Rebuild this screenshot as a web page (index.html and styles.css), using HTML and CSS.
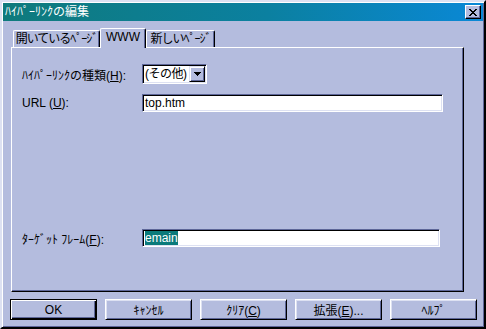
FILE: index.html
```html
<!DOCTYPE html>
<html lang="ja">
<head>
  <meta charset="UTF-8">
  <title>ﾊｲﾊﾟｰﾘﾝｸの編集</title>
  <link rel="stylesheet" href="styles.css">
</head>
<body>

<div class="dialog">
  <div class="titlebar">
    <span class="title">ﾊｲﾊﾟｰﾘﾝｸの編集</span>
    <button class="close" aria-label="閉じる">
      <svg width="8" height="7" viewBox="0 0 8 7" shape-rendering="crispEdges">
        <path d="M0 0h2v1h-2zM6 0h2v1h-2zM1 1h2v1h-2zM5 1h2v1h-2zM2 2h4v1h-4zM3 3h2v1h-2zM2 4h4v1h-4zM1 5h2v1h-2zM5 5h2v1h-2zM0 6h2v1h-2zM6 6h2v1h-2z" fill="#000"/>
      </svg>
    </button>
  </div>

  <div class="tabs">
    <div class="tab tab-open">開いているﾍﾟｰｼﾞ</div>
    <div class="tab tab-www active">WWW</div>
    <div class="tab tab-new">新しいﾍﾟｰｼﾞ</div>
  </div>

  <div class="panel">
    <div class="row row-type">
      <span class="label">ﾊｲﾊﾟｰﾘﾝｸの種類(<u>H</u>):</span>
      <div class="combo">
        <span class="combo-text">(その他)</span>
        <span class="combo-btn">
          <svg width="7" height="4" viewBox="0 0 7 4" shape-rendering="crispEdges">
            <path d="M0 0h7v1h-7zM1 1h5v1h-5zM2 2h3v1h-3zM3 3h1v1h-1z" fill="#000"/>
          </svg>
        </span>
      </div>
    </div>
    <div class="row row-url">
      <span class="label">URL (<u>U</u>):</span>
      <div class="field field-url">top.htm</div>
    </div>
    <div class="row row-target">
      <span class="label">ﾀｰｹﾞｯﾄ ﾌﾚｰﾑ(<u>F</u>):</span>
      <div class="field field-target"><span class="selected">emain</span></div>
    </div>
  </div>

  <div class="buttons">
    <button class="btn btn-default">OK</button>
    <button class="btn">ｷｬﾝｾﾙ</button>
    <button class="btn">ｸﾘｱ(<u>C</u>)</button>
    <button class="btn">拡張(<u>E</u>)...</button>
    <button class="btn">ﾍﾙﾌﾟ</button>
  </div>
</div>

</body>
</html>
```

FILE: styles.css
```css
body {
  margin: 0;
  font-family: "Liberation Sans", "Noto Sans CJK JP", sans-serif;
  font-size: 12px;
  color: #000;
  background: #b4bcde;
}

.dialog {
  width: 486px;
  height: 329px;
  box-sizing: border-box;
  padding: 1px;
  border: 2px solid;
  border-color: #dde1f2 #000 #000 #dde1f2;
  box-shadow: inset 1px 1px 0 #fff, inset -1px -1px 0 #5d6698;
  background: #b4bcde;
  display: flex;
  flex-direction: column;
}

/* title bar */
.titlebar {
  height: 18px;
  flex: none;
  display: flex;
  align-items: center;
  justify-content: space-between;
  padding: 0 2px;
  background: linear-gradient(to right, #0f7a7c, #0b80a0 55%, #0a88d6);
}

.title {
  color: #fff;
  line-height: 18px;
}

.close {
  width: 16px;
  height: 14px;
  padding: 0;
  display: flex;
  align-items: center;
  justify-content: center;
  background: #b4bcde;
  border: 1px solid;
  border-color: #fff #000 #000 #fff;
  box-shadow: inset -1px -1px 0 #5d6698;
}

/* tabs */
.tabs {
  height: 20px;
  flex: none;
  margin-top: 7px;
  padding-left: 10px;
  display: flex;
  align-items: flex-end;
}

.tab {
  height: 18px;
  box-sizing: border-box;
  border-top: 1px solid #fff;
  border-left: 1px solid #fff;
  border-right: 1px solid #000;
  border-radius: 2px 2px 0 0;
  box-shadow: inset -1px 0 0 #5d6698;
  text-align: center;
  line-height: 16px;
  white-space: nowrap;
  background: #b4bcde;
}

.tab-open { width: 87px; letter-spacing: -1px; }
.tab-www { width: 46px; }
.tab-new { width: 69px; letter-spacing: -1px; }

.tab.active {
  height: 20px;
  position: relative;
  z-index: 1;
  line-height: 17px;
}

/* page */
.panel {
  width: 453px;
  height: 245px;
  flex: none;
  box-sizing: border-box;
  margin: -1px 0 0 8px;
  padding: 16px 0 0 10px;
  border: 1px solid;
  border-color: #fff #000 #000 #fff;
  box-shadow: inset -1px -1px 0 #5d6698;
}

.row {
  display: flex;
  align-items: center;
}

.row-type { height: 20px; }
.row-url { height: 18px; margin-top: 10px; }
.row-target { height: 18px; margin-top: 117px; }

.label {
  width: 120px;
  flex: none;
  white-space: nowrap;
}

.combo {
  width: 65px;
  height: 20px;
  box-sizing: border-box;
  display: flex;
  border: 1px solid;
  border-color: #5d6698 #fff #fff #5d6698;
  box-shadow: inset 1px 1px 0 #000, inset -1px -1px 0 #dde1f2;
  padding: 1px;
  background: #fff;
}

.combo-text {
  flex: 1;
  overflow: hidden;
  white-space: nowrap;
  line-height: 16px;
  padding-left: 1px;
  letter-spacing: -0.5px;
}

.combo-btn {
  width: 16px;
  height: 16px;
  box-sizing: border-box;
  display: flex;
  align-items: center;
  justify-content: center;
  background: #b4bcde;
  border: 1px solid;
  border-color: #dde1f2 #000 #000 #dde1f2;
  box-shadow: inset 1px 1px 0 #fff, inset -1px -1px 0 #5d6698;
}

.field {
  height: 18px;
  box-sizing: border-box;
  border: 1px solid;
  border-color: #5d6698 #fff #fff #5d6698;
  box-shadow: inset 1px 1px 0 #000, inset -1px -1px 0 #dde1f2;
  background: #fff;
  padding: 1px 1px 0 2px;
  line-height: 15px;
  white-space: nowrap;
}

.field-url { width: 301px; }
.field-target { width: 298px; }

.selected {
  background: #0a7a7a;
  color: #fff;
}

/* buttons */
.buttons {
  flex: none;
  margin-top: 7px;
  padding-left: 7px;
  display: flex;
  gap: 8px;
}

.btn {
  width: 87px;
  height: 21px;
  padding: 0;
  font: inherit;
  color: #000;
  background: #b4bcde;
  border: 1px solid;
  border-color: #fff #000 #000 #fff;
  box-shadow: inset 1px 1px 0 #dde1f2, inset -1px -1px 0 #5d6698;
}

.btn-default {
  border-color: #000;
  box-shadow: inset 1px 1px 0 #fff, inset -1px -1px 0 #000, inset -2px -2px 0 #5d6698;
}
```
